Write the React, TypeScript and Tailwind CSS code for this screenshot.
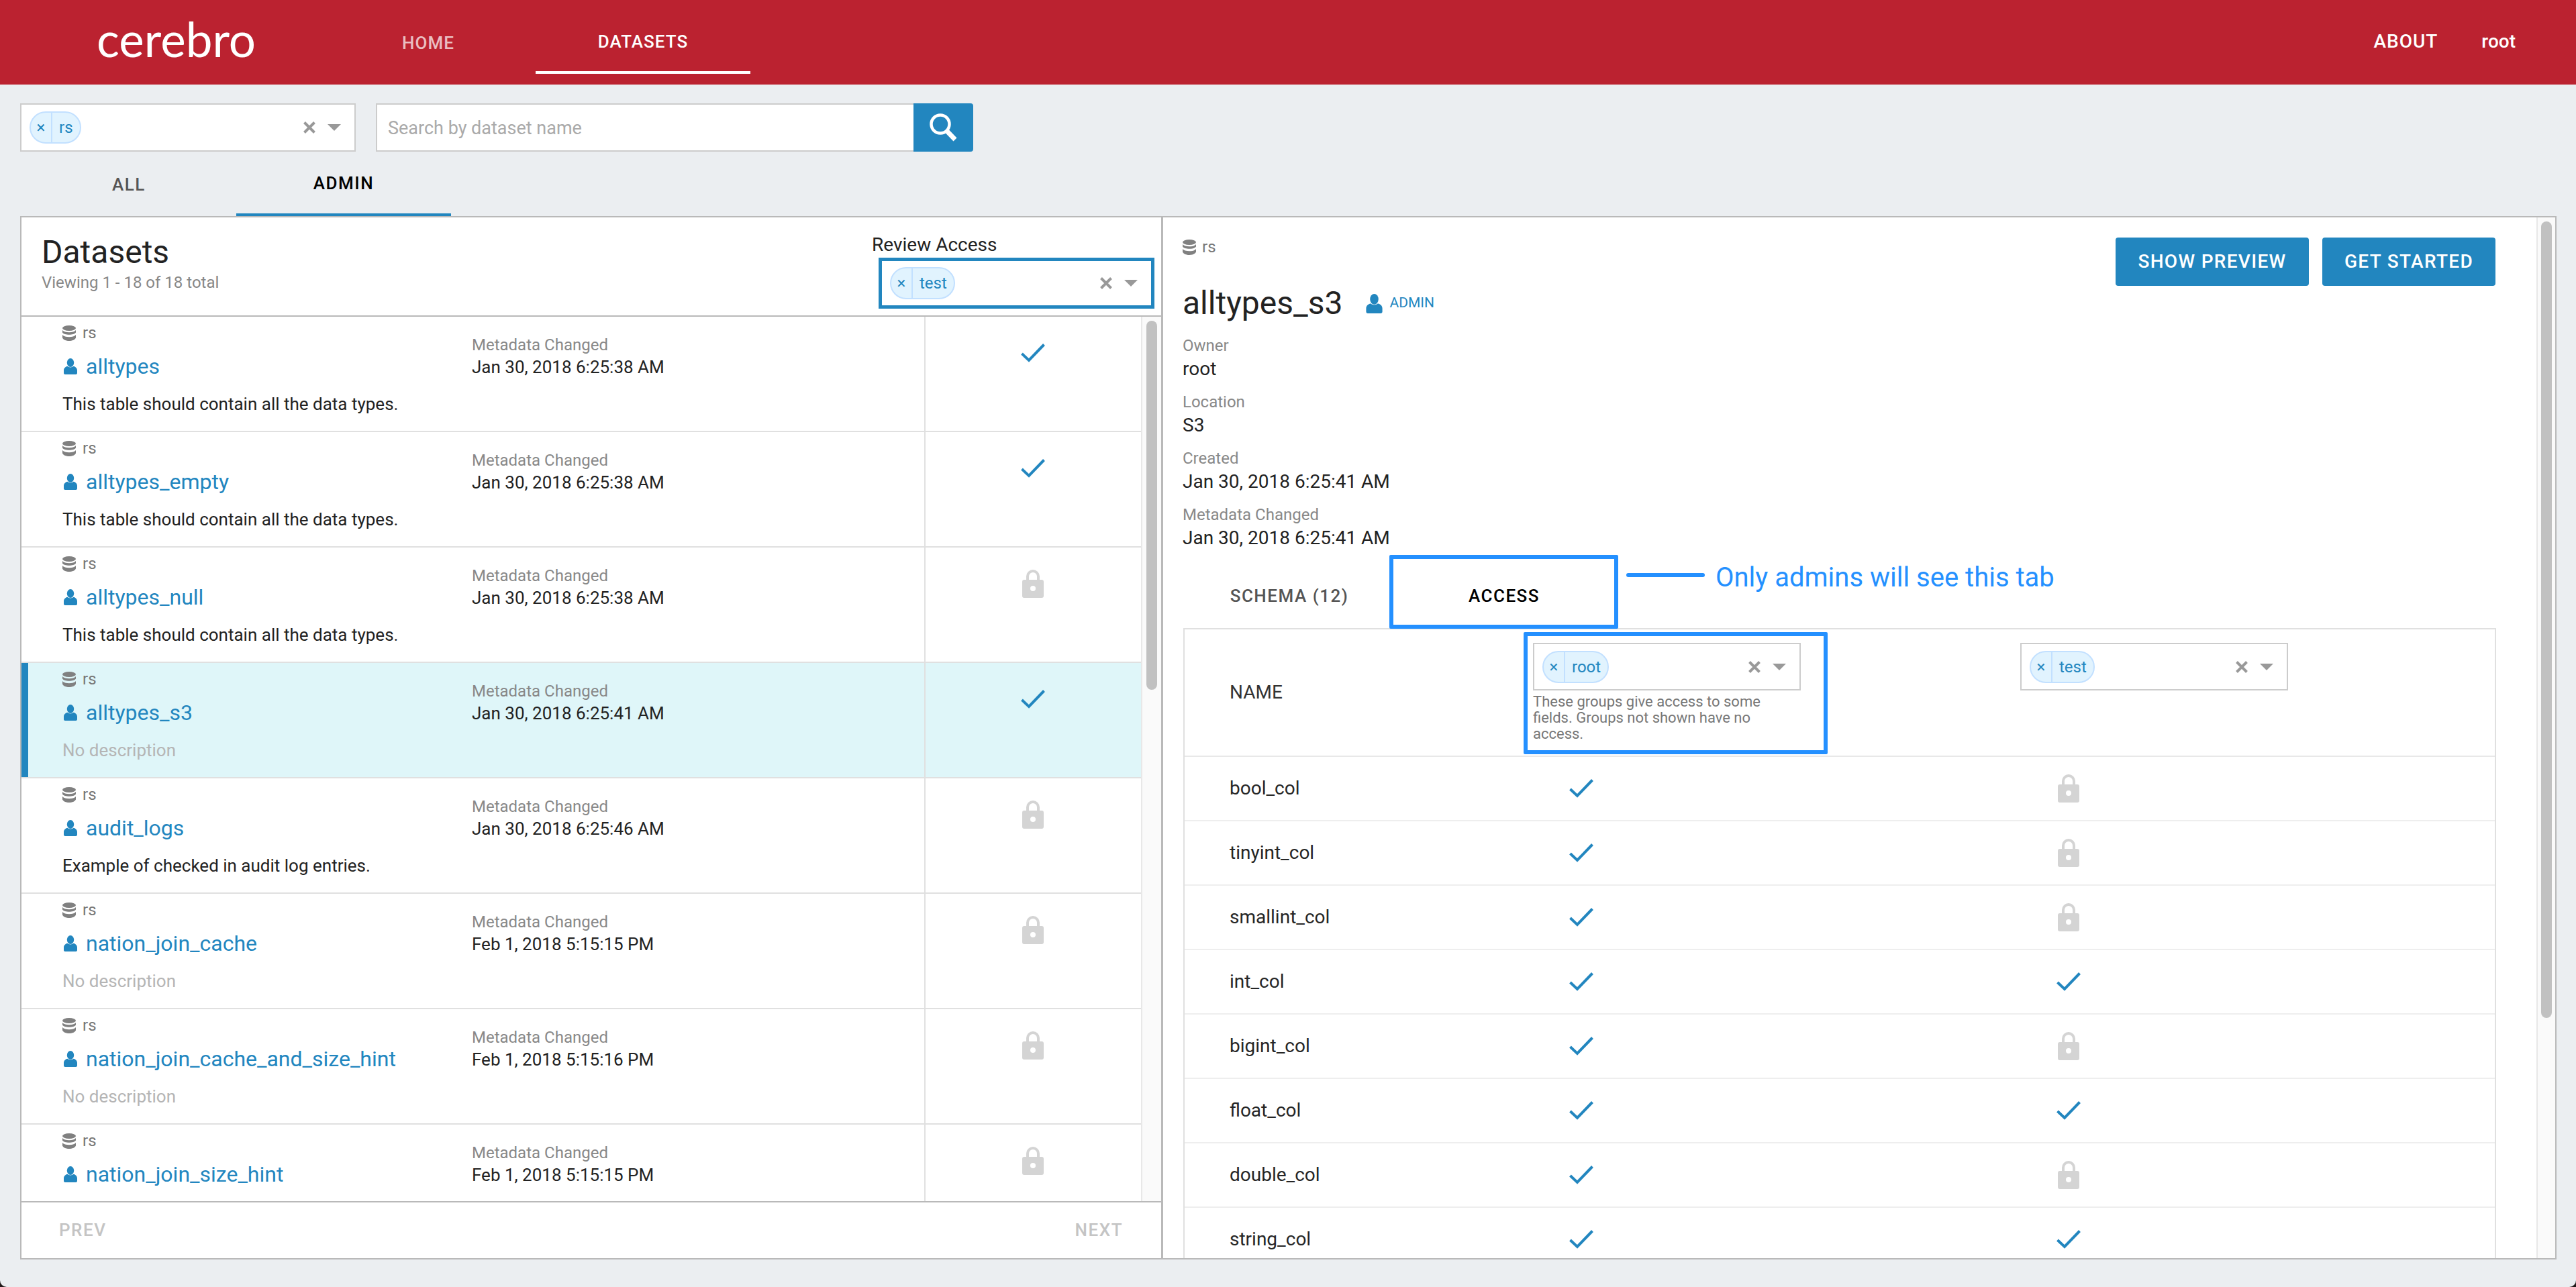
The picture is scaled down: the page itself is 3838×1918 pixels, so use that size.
import React from "react";

const Db = ({ c = "" }: { c?: string }) => (
  <svg viewBox="0 0 20 23" className={"w-[20px] h-[23px] shrink-0 fill-[#808080] " + c}>
    <ellipse cx="10" cy="4" rx="10" ry="4" />
    <path d="M0 7c2 2.4 5.5 3.2 10 3.2S18 9.400 20 7v3.500c-1.500 2.200-5.500 3.200-10 3.200S1.500 12.700 0 10.500z" />
    <path d="M0 14c2 2.400 5.500 3.200 10 3.200S18 16.400 20 14v4.500C18.500 21.500 14.500 23 10 23S1.500 21.500 0 18.500z" />
  </svg>
);

const Person = ({ c = "" }: { c?: string }) => (
  <svg viewBox="0 0 20 24" className={"fill-[#2286bf] shrink-0 " + c}>
    <ellipse cx="10" cy="6.500" rx="5.200" ry="6.500" />
    <path d="M0 18c0-3.500 2.500-5.500 5.500-6.300 2.600 2.300 6.400 2.300 9 0 3 .8 5.500 2.800 5.500 6.300v4c0 1.200-.8 2-2 2H2c-1.200 0-2-.8-2-2z" />
  </svg>
);

const Check = () => (
  <svg viewBox="0 0 36 28" className="w-[36px] h-[28px] fill-none stroke-[#2286bf] stroke-[4]">
    <path d="M1.500 15 12 25 34.500 1.500" />
  </svg>
);

const Lock = () => (
  <svg viewBox="0 0 32 42" className="w-[32px] h-[42px]">
    <path d="M8 18v-8a8 8 0 0 1 16 0v8" className="fill-none stroke-[#d4d4d4] stroke-[4]" />
    <path
      fillRule="evenodd"
      d="M3 15h26a3 3 0 0 1 3 3v21a3 3 0 0 1-3 3H3a3 3 0 0 1-3-3V18a3 3 0 0 1 3-3zm13 9a4 4 0 1 0 0 8 4 4 0 0 0 0-8z"
      className="fill-[#d4d4d4]"
    />
  </svg>
);

const SelectEnd = () => (
  <div className="ml-auto flex items-center gap-[18px] pr-[20px]">
    <svg viewBox="0 0 18 18" className="w-[18px] h-[18px] stroke-[#999999] stroke-[4] fill-none">
      <path d="M1.500 1.500 16.500 16.500M16.500 1.500 1.500 16.500" />
    </svg>
    <div className="w-0 h-0 border-x-[10px] border-x-transparent border-t-[10px] border-t-[#999999]" />
  </div>
);

const Pill = ({ t }: { t: string }) => (
  <div className="h-[48px] flex items-stretch rounded-full border-2 border-[#c2e0ff] bg-[#e1f3fe] text-[#2286bf] text-[24px] leading-none">
    <span className="flex items-center justify-center border-r-2 border-[#c2e0ff] w-[32px]">×</span>
    <span className="flex items-center px-[10px]">{t}</span>
  </div>
);

const Select = ({ t, c }: { t: string; c: string }) => (
  <div className={"flex items-center bg-white pl-[12px] " + c}>
    <Pill t={t} />
    <SelectEnd />
  </div>
);

type Row = { name: string; desc?: string; date: string; ok: boolean; sel?: boolean; clipped?: boolean };
const rows: Row[] = [
  { name: "alltypes", desc: "This table should contain all the data types.", date: "Jan 30, 2018 6:25:38 AM", ok: true },
  { name: "alltypes_empty", desc: "This table should contain all the data types.", date: "Jan 30, 2018 6:25:38 AM", ok: true },
  { name: "alltypes_null", desc: "This table should contain all the data types.", date: "Jan 30, 2018 6:25:38 AM", ok: false },
  { name: "alltypes_s3", date: "Jan 30, 2018 6:25:41 AM", ok: true, sel: true },
  { name: "audit_logs", desc: "Example of checked in audit log entries.", date: "Jan 30, 2018 6:25:46 AM", ok: false },
  { name: "nation_join_cache", date: "Feb 1, 2018 5:15:15 PM", ok: false },
  { name: "nation_join_cache_and_size_hint", date: "Feb 1, 2018 5:15:16 PM", ok: false },
  { name: "nation_join_size_hint", date: "Feb 1, 2018 5:15:15 PM", ok: false, clipped: true },
];

const DatasetRow = ({ r }: { r: Row }) => (
  <div className={"relative h-[172px] shrink-0 flex border-b-2 border-[#e0e0e0] " + (r.sel ? "bg-[#dff6f9]" : "bg-white")}>
    {r.sel && <div className="absolute left-0 top-0 bottom-0 w-[10px] bg-[#2286bf]" />}
    <div className="w-[671px] pl-[61px] pt-[10px]">
      <div className="h-[28px] flex items-center gap-[10px] text-[24px] text-[#777777]">
        <Db />
        <span>rs</span>
      </div>
      <div className="mt-[18px] h-[36px] flex items-center gap-[13px] text-[32px] text-[#2286bf] pl-[2px]">
        <Person c="w-[20px] h-[24px]" />
        <span>{r.name}</span>
      </div>
      {!r.clipped && (
        <div className={"mt-[22px] h-[32px] flex items-center text-[26px] " + (r.desc ? "text-[#222222]" : "text-[#b5b5b5]")}>
          {r.desc ?? "No description"}
        </div>
      )}
    </div>
    <div className="w-[674px] pt-[28px]">
      <div className="h-[28px] flex items-center text-[24px] text-[#888888]">Metadata Changed</div>
      <div className="h-[38px] flex items-center text-[26px] text-[#222222]">{r.date}</div>
    </div>
    <div className="flex-1 border-l-2 border-[#e0e0e0] flex justify-center pr-[2px]">
      {r.ok ? (
        <div className="pt-[40px]"><Check /></div>
      ) : (
        <div className="pt-[33px]"><Lock /></div>
      )}
    </div>
  </div>
);

const Field = ({ k, v }: { k: string; v: string }) => (
  <div className="mb-[14px]">
    <div className="h-[28px] flex items-center text-[24px] text-[#888888]">{k}</div>
    <div className="h-[42px] flex items-center text-[28px] text-[#222222]">{v}</div>
  </div>
);

const cols: [string, boolean, boolean][] = [
  ["bool_col", true, false],
  ["tinyint_col", true, false],
  ["smallint_col", true, false],
  ["int_col", true, true],
  ["bigint_col", true, false],
  ["float_col", true, true],
  ["double_col", true, false],
  ["string_col", true, true],
];

const Scroll = ({ c, t }: { c: string; t: string }) => (
  <div className={"shrink-0 bg-[#fafafa] border-l-2 border-[#e8e8e8] flex flex-col items-center " + c}>
    <div className={"w-[16px] rounded-full bg-[#c1c1c1] " + t} />
  </div>
);

export default function App() {
  return (
    <div className="w-[3838px] h-[1918px] bg-[#221a1a] overflow-hidden font-['Roboto',sans-serif]">
      <div className="h-full rounded-b-[10px] bg-[#ebeef1] flex flex-col overflow-hidden">
        <header className="h-[126px] shrink-0 bg-[#bb2230] flex text-white font-medium text-[26px] tracking-[1px]">
          <div className="w-[478px] pl-[144px] pt-[16px] font-['Lato',sans-serif] font-normal text-[71px] leading-[84px] tracking-normal">cerebro</div>
          <div className="w-[320px] h-[110px] pt-[18px] flex items-center justify-center opacity-70">HOME</div>
          <div className="w-[320px] h-[110px] pt-[18px] flex items-center justify-center border-b-4 border-white">DATASETS</div>
          <div className="ml-auto flex items-center gap-[65px] pr-[90px] pb-[2px] text-[28px]">
            <span>ABOUT</span>
            <span className="tracking-normal">root</span>
          </div>
        </header>

        <div className="mt-[28px] ml-[30px] h-[72px] shrink-0 flex gap-[30px]">
          <Select t="rs" c="w-[500px] border-2 border-[#cccccc]" />
          <div className="flex">
            <div className="w-[801px] border-2 border-r-0 border-[#cccccc] bg-white flex items-center pl-[16px] pt-[2px] text-[27px] text-[#aaaaaa]">Search by dataset name</div>
            <div className="w-[89px] bg-[#2286bf] rounded-r-[4px] flex items-center justify-center">
              <svg viewBox="0 0 44 44" className="w-[44px] h-[44px] fill-none stroke-white">
                <circle cx="17" cy="17" r="13.500" strokeWidth="4.500" />
                <path d="M26.500 27 39 40" strokeWidth="7" />
              </svg>
            </div>
          </div>
        </div>

        <div className="ml-[32px] h-[96px] shrink-0 flex text-[26px] font-medium tracking-[1.5px]">
          <div className="w-[320px] pt-[2px] flex items-center justify-center text-[#555555]">ALL</div>
          <div className="w-[320px] pt-[2px] flex items-center justify-center text-black border-b-4 border-[#2286bf]">ADMIN</div>
        </div>

        <main className="ml-[30px] w-[3779px] h-[1555px] shrink-0 border-2 border-[#b9b9b9] bg-white flex">
          <section className="w-[1701px] shrink-0 flex flex-col border-r-[3px] border-[#b9b9b9]">
            <div className="h-[148px] shrink-0 border-b-2 border-[#b9b9b9] flex justify-between pl-[30px] pr-[10px]">
              <div className="pt-[24px]">
                <div className="h-[56px] flex items-center text-[48px] text-[#222222]">Datasets</div>
                <div className="mt-[2px] h-[30px] flex items-center text-[24px] text-[#888888]">Viewing 1 - 18 of 18 total</div>
              </div>
              <div className="pt-[21px]">
                <div className="h-[39px] -ml-[10px] flex items-center text-[28px] text-[#222222]">Review Access</div>
                <Select t="test" c="w-[411px] h-[76px] border-[5px] border-[#2286bf] pl-[10px]" />
              </div>
            </div>
            <div className="flex-1 min-h-0 flex overflow-hidden">
              <div className="flex-1 flex flex-col overflow-hidden">
                {rows.map((r) => <DatasetRow key={r.name} r={r} />)}
              </div>
              <Scroll c="w-[30px] pt-[6px]" t="h-[550px]" />
            </div>
            <div className="h-[85px] shrink-0 border-t-2 border-[#b9b9b9] flex items-center justify-between pl-[56px] pr-[57px] text-[26px] font-medium tracking-[1.5px] text-[#c4c4c4]">
              <span>PREV</span>
              <span>NEXT</span>
            </div>
          </section>

          <section className="flex-1 min-w-0 flex">
            <div className="w-[2046px] shrink-0 pl-[29px] flex flex-col">
              <div className="flex justify-between pt-[30px] pr-[61px]">
                <div>
                  <div className="h-[28px] flex items-center gap-[9px] text-[24px] text-[#777777]">
                    <Db />
                    <span>rs</span>
                  </div>
                  <div className="mt-[40px] h-[60px] flex items-center">
                    <span className="text-[48px] text-[#222222]">alltypes_s3</span>
                    <Person c="ml-[35px] w-[25px] h-[29px]" />
                    <span className="ml-[10px] text-[21px] text-[#2286bf]">ADMIN</span>
                  </div>
                </div>
                <div className="flex gap-[20px] text-white text-[28px] font-medium tracking-[1.3px]">
                  <div className="w-[288px] h-[72px] bg-[#2286bf] rounded-[4px] flex items-center justify-center">SHOW PREVIEW</div>
                  <div className="w-[258px] h-[72px] bg-[#2286bf] rounded-[4px] flex items-center justify-center">GET STARTED</div>
                </div>
              </div>
              <div className="mt-[19px]">
                <Field k="Owner" v="root" />
                <Field k="Location" v="S3" />
                <Field k="Created" v="Jan 30, 2018 6:25:41 AM" />
                <Field k="Metadata Changed" v="Jan 30, 2018 6:25:41 AM" />
              </div>
              <div className="-mt-[10px] h-[110px] shrink-0 flex text-[26px] font-medium tracking-[1.5px]">
                <div className="w-[320px] -ml-[1px] pt-[12px] flex items-center justify-center text-[#555555]">SCHEMA (12)</div>
                <div className="relative w-[320px] pt-[12px] flex items-center justify-center text-black">
                  ACCESS
                  <div className="absolute left-[-11px] top-0 w-[341px] h-[110px] border-[6px] border-[#2490ff] rounded-[2px]" />
                  <div className="absolute left-[342px] top-[27px] w-[117px] h-[6px] rounded-full bg-[#2490ff]" />
                  <div className="absolute left-[475px] top-[9px] h-[50px] flex items-center whitespace-nowrap text-[40px] font-normal tracking-normal text-[#2490ff]">Only admins will see this tab</div>
                </div>
              </div>
              <div className="flex-1 min-h-0 w-[1956px] ml-[1px] border-x-2 border-t-2 border-[#e0e0e0] -mt-[1px] overflow-hidden">
                <div className="h-[190px] flex border-b-2 border-[#e8e8e8]">
                  <div className="w-[519px] pl-[67px] flex items-center text-[28px] text-[#333333]">NAME</div>
                  <div className="relative w-[726px] pt-[20px]">
                    <Select t="root" c="w-[399px] h-[71px] border-2 border-[#cccccc]" />
                    <div className="w-[400px] mt-[5px] text-[22px] leading-[24px] text-[#777777]">These groups give access to some fields. Groups not shown have no access.</div>
                    <div className="absolute left-[-14px] top-[4px] w-[453px] h-[182px] border-[6px] border-[#2490ff] rounded-[2px]" />
                  </div>
                  <div className="pt-[20px]">
                    <Select t="test" c="w-[399px] h-[71px] border-2 border-[#cccccc]" />
                  </div>
                </div>
                {cols.map(([n, a, b]) => (
                  <div key={n} className="h-[96px] flex items-center border-b-2 border-[#eeeeee]">
                    <div className="w-[519px] pl-[67px] text-[28px] text-[#262626]">{n}</div>
                    <div className="w-[726px]">
                      <div className="w-[144px] flex justify-center">{a ? <Check /> : <Lock />}</div>
                    </div>
                    <div className="w-[144px] flex justify-center">{b ? <Check /> : <Lock />}</div>
                  </div>
                ))}
              </div>
            </div>
            <Scroll c="flex-1 pt-[6px]" t="h-[1187px]" />
          </section>
        </main>
      </div>
    </div>
  );
}
